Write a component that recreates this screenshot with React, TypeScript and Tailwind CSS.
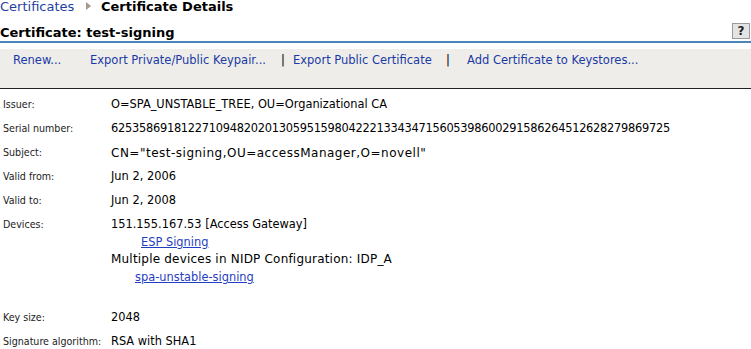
import React from "react";

const F = { fontFamily: '"DejaVu Sans", Verdana, sans-serif' };
const LF = { fontFamily: '"DejaVu Sans Condensed", Tahoma, sans-serif' };

function Row({ label, children, cls = "" }: { label: string; children: React.ReactNode; cls?: string }) {
  return (
    <div className="flex h-[24px] items-center">
      <div className="w-[111px] shrink-0 pl-[3px] text-[10.6px] text-[#222]" style={LF}>{label}</div>
      <div className={"text-[11.4px] text-black whitespace-nowrap " + cls}>{children}</div>
    </div>
  );
}

export default function App() {
  return (
    <div className="w-[751px] h-[349px] overflow-hidden bg-white" style={F}>
      <div className="flex items-start h-[14px] text-[13px] leading-[13px]">
        <span className="w-[86px] text-[#1f3fa0]">Certificates</span>
        <span className="w-[15px] pt-[2px]"><span className="block w-0 h-0 border-y-[4px] border-y-transparent border-l-[5px] border-l-[#a39a8a]"></span></span>
        <span className="font-bold text-black">Certificate Details</span>
      </div>
      <div className="flex items-end justify-between h-[27px]">
        <span className="font-bold text-[13px] leading-[16px] text-black">Certificate: test-signing</span>
        <span className="mr-[1px] mb-[2px] flex h-[16px] w-[18px] items-center justify-center border border-[#9a9a9a] bg-[#e4e4e4] text-[12px] font-bold leading-none text-[#222]">?</span>
      </div>
      <div className="h-[2px] bg-[#4a86b8]"></div>
      <div className="h-[6px]"></div>
      <div className="h-[40px] bg-[#eeede9] border-b border-[#222] flex items-start pt-[4px] text-[11.5px] leading-[14px] text-[#1a3aa6] whitespace-nowrap">
        <span className="ml-[13px] w-[77px]">Renew...</span>
        <span className="w-[191px]">Export Private/Public Keypair...</span>
        <span className="w-[12px] text-black">|</span>
        <span className="w-[153px]">Export Public Certificate</span>
        <span className="w-[21px] text-black">|</span>
        <span>Add Certificate to Keystores...</span>
      </div>
      <div className="h-[4px]"></div>
      <Row label="Issuer:">O=SPA_UNSTABLE_TREE, OU=Organizational CA</Row>
      <Row label="Serial number:" cls="tracking-[-0.26px]">62535869181227109482020130595159804222133434715605398600291586264512628279869725</Row>
      <Row label="Subject:" cls="text-[12px] tracking-[0.5px]">CN="test-signing,OU=accessManager,O=novell"</Row>
      <Row label="Valid from:">Jun 2, 2006</Row>
      <Row label="Valid to:">Jun 2, 2008</Row>
      <div className="flex pt-[3px] pb-[19px]">
        <div className="w-[111px] shrink-0 pl-[3px] text-[10.6px] leading-[17.7px] text-[#222]" style={LF}>Devices:</div>
        <div className="text-[11.4px] leading-[17.7px] text-black whitespace-nowrap">
          <div>151.155.167.53 [Access Gateway]</div>
          <div className="pl-[30px]"><span className="text-[#1f3ec0] underline">ESP Signing</span></div>
          <div className="text-[12px] tracking-[0.2px]">Multiple devices in NIDP Configuration: IDP_A</div>
          <div className="pl-[24px]"><span className="text-[#1f3ec0] underline">spa-unstable-signing</span></div>
        </div>
      </div>
      <Row label="Key size:">2048</Row>
      <Row label="Signature algorithm:">RSA with SHA1</Row>
    </div>
  );
}
